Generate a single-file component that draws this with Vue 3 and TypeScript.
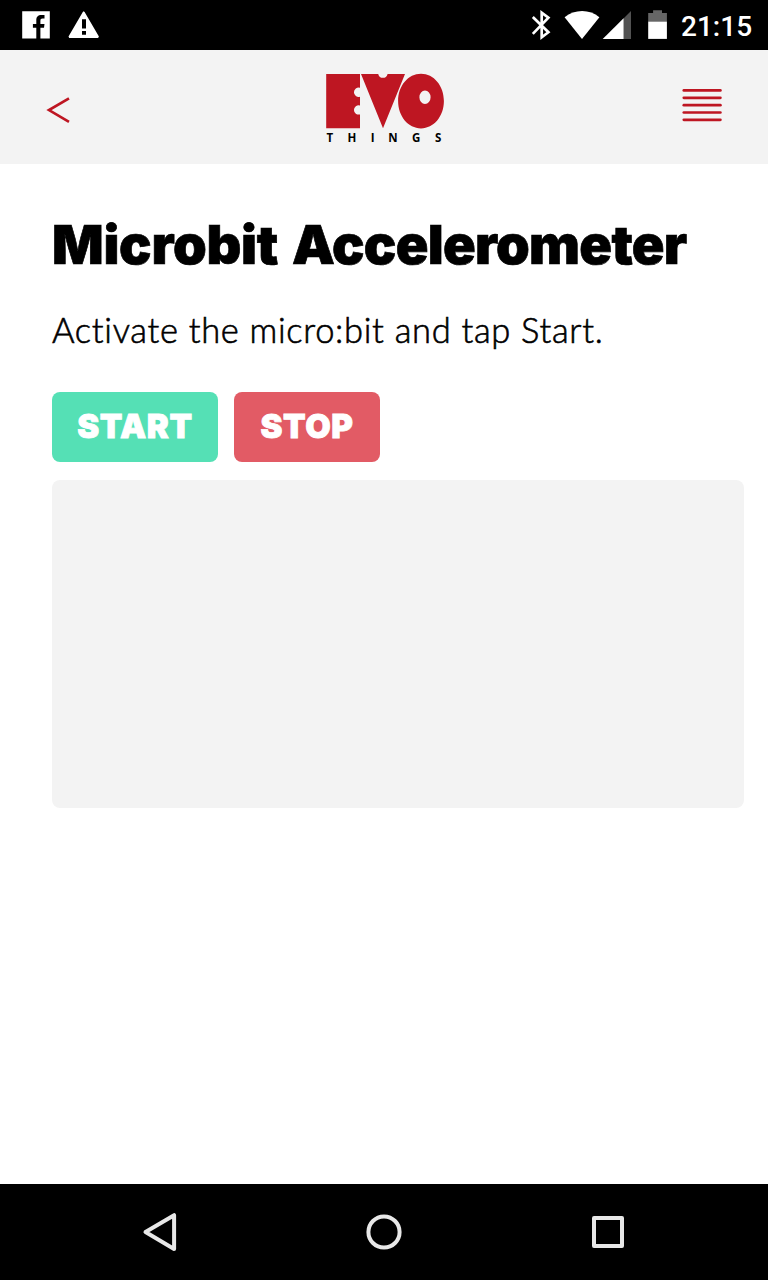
<script setup lang="ts">
const menuLines: number[] = [2.4, 9.8, 17.2, 24.5, 31.8]
</script>

<template>
  <div class="screen">
    <div class="status">
      <svg class="status-icons" width="110" height="50" viewBox="0 0 110 50">
        <path fill="#fff" d="M22.2 11.3h27.6v27.3h-9.4v-10.8h3.6l.5-3.8h-4.1v-3.2c0-1.6.6-2.3 2.1-2.3h2v-3.5h-3c-3.6 0-5.2 2-5.2 5.1v3.9h-3.4v3.8h3.4v10.8h-14.1z" />
        <path fill="#fff" fill-rule="evenodd" d="M83.7 11.2l.9.9 14.3 24.4-.8 1.4H69.2l-.7-1.4 14.3-24.4zM82 19.2v9.4h4v-9.4zM82 31v3.8h4v-3.8z" />
      </svg>
      <svg class="status-icons" width="158" height="50" viewBox="520 0 158 50">
        <path fill="none" stroke="#fff" stroke-width="2.7" d="M532.8 17l15.6 15.2-6.7 5.1V12.6l6.7 5.1L532.8 33.9" />
        <path fill="#fff" d="M564.6 17.2C574.5 8.8 589.8 8.8 599.4 17.2L582 39z" />
        <path fill="#525252" d="M623.5 18.4L631 10.9v28.2h-7.5z" />
        <path fill="#fff" d="M602.7 39.1l20.9-20.9v20.9z" />
        <path fill="#666" d="M648.2 13h4.9v-2.8h8.9V13h4.9v9h-18.7z" />
        <path fill="#fff" d="M648.2 21.7h18.7v17.2h-18.7z" />
      </svg>
      <span class="clock">21:15</span>
    </div>

    <header class="bar">
      <svg width="30" height="34" viewBox="44 93 30 34">
        <path d="M69 98.3L49 110.1l20 11.7" fill="none" stroke="#be1622" stroke-width="2.7" />
      </svg>
      <svg class="logo" width="124" height="76" viewBox="323 71 124 76">
        <path fill="#be1622" d="M326.2 74H360v13.8a4.7 4.7 0 1 0 0 9v8.6a4.7 4.7 0 1 0 0 9v13.9h-33.8z" />
        <path fill="#be1622" d="M361 74h17.2a4.9 5.4 0 0 0 9.4 0H405l-22 54.3z" />
        <path fill="#be1622" fill-rule="evenodd" d="M421 73.8c12.8 0 22.9 12 22.9 27.3s-10.1 27.3-22.9 27.3-22.9-12-22.9-27.3 10.1-27.3 22.9-27.3zM425 90.6a5.6 6.7 0 1 0 0 13.4 5.6 6.7 0 1 0 0-13.4z" />
        <g class="things">
          <text x="329.8" y="141.9">T</text>
          <text x="352" y="141.9">H</text>
          <text x="372.6" y="141.9">I</text>
          <text x="393" y="141.9">N</text>
          <text x="416.2" y="141.9">G</text>
          <text x="438.2" y="141.9">S</text>
        </g>
      </svg>
      <svg class="menu" width="42" height="34" viewBox="0 0 42 34">
        <path v-for="y in menuLines" :key="y" :d="`M2.8 ${y}H39.4`" stroke="#be1622" stroke-width="2.7" stroke-linecap="round" />
      </svg>
    </header>

    <main class="content">
      <h1><span class="w1">Microbit</span><span class="w2">Accelerometer</span></h1>
      <p>Activate the micro:bit and tap Start.</p>
      <div class="buttons">
        <button class="start"><span>START</span></button>
        <button class="stop"><span>STOP</span></button>
      </div>
      <div class="canvas"></div>
    </main>

    <nav class="nav">
      <svg width="768" height="96" viewBox="0 1184 768 96" fill="none" stroke="#e8e8e8" stroke-width="4" stroke-linejoin="round">
        <path d="M174.1 1215.2v33.8L145.5 1232z" />
        <circle cx="384" cy="1232" r="15.6" />
        <path d="M594 1218h28v28h-28z" />
      </svg>
    </nav>
  </div>
</template>

<style>
body { margin: 0; background: #fff; }
</style>

<style scoped>
.screen { width: 768px; height: 1280px; display: flex; flex-direction: column; background: #fff; overflow: hidden; color: #000; }
.status { height: 50px; flex: none; background: #000; display: flex; }
.status-icons { display: block; }
.status-icons + .status-icons { margin-left: 410px; }
.clock { margin-left: 3px; color: #fff; font: 500 28px/54px Roboto, sans-serif; white-space: nowrap; }
.bar { height: 114px; flex: none; box-sizing: border-box; background: #f3f3f3; display: flex; align-items: flex-start; padding: 21px 0 0 44px; }
.bar svg { display: block; flex: none; }
.bar svg:first-child { margin-top: 22px; }
.bar .logo { margin-left: 249px; }
.bar .menu { margin: 17px 0 0 234px; }
.things { font: 700 11.5px "Open Sans", "Liberation Sans", sans-serif; text-anchor: middle; fill: #000; }
.content { flex: 1; padding: 50px 24px 0 52px; }
h1 { margin: 0; height: 64px; display: flex; font: 900 54px/62px Inter, sans-serif; white-space: nowrap; -webkit-text-stroke: 0.7px #000; }
.w1 { width: 240px; letter-spacing: -0.25px; }
.w2 { letter-spacing: -0.7px; }
p { margin: 30px 0 0; height: 44px; font: 300 34.5px/44px Lato, sans-serif; white-space: nowrap; font-variant-ligatures: none; letter-spacing: 0.68px; -webkit-text-stroke: 0.6px #000; }
.buttons { display: flex; gap: 16px; margin-top: 40px; }
button { height: 70px; border: 0; border-radius: 8px; padding: 0 0 2px; color: #fff; font: 900 33px/66px Inter, sans-serif; white-space: nowrap; text-align: center; -webkit-text-stroke: 0.8px #fff; letter-spacing: 0.6px; }
.start { width: 166px; background: #55e0b5; }
.stop { width: 146px; background: #e25b65; }
.canvas { margin-top: 18px; height: 328px; border-radius: 8px; background: #f3f3f3; }
.nav { height: 96px; flex: none; background: #000; }
.nav svg { display: block; }
</style>
